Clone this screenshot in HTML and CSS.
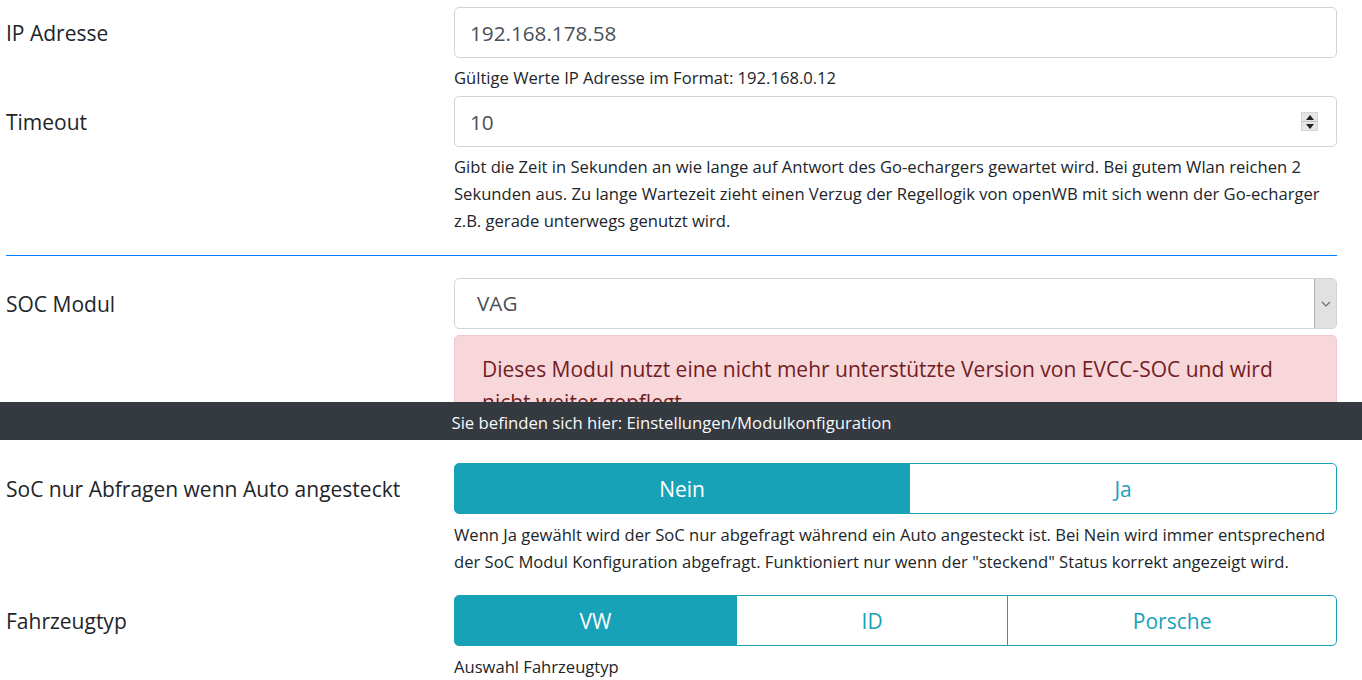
FILE: index.html
```html
<!DOCTYPE html>
<html lang="de">
<head>
  <meta charset="UTF-8">
  <meta name="viewport" content="width=device-width, initial-scale=1.0">
  <title>Modulkonfiguration</title>
  <link rel="stylesheet" href="styles.css">
</head>
<body>
  <div class="page">
    <div class="form-row">
      <label class="col-label">IP Adresse</label>
      <div class="col-field">
        <input type="text" class="form-control" value="192.168.178.58">
        <div class="form-text">Gültige Werte IP Adresse im Format: 192.168.0.12</div>
      </div>
    </div>

    <div class="form-row">
      <label class="col-label">Timeout</label>
      <div class="col-field">
        <div class="number-wrap">
          <input type="text" class="form-control" value="10">
          <span class="spinner">
            <span class="spin-up"></span>
            <span class="spin-down"></span>
          </span>
        </div>
        <div class="form-text">Gibt die Zeit in Sekunden an wie lange auf Antwort des Go-echargers gewartet wird. Bei gutem Wlan reichen 2 Sekunden aus. Zu lange Wartezeit zieht einen Verzug der Regellogik von openWB mit sich wenn der Go-echarger z.B. gerade unterwegs genutzt wird.</div>
      </div>
    </div>

    <hr class="divider">

    <div class="form-row">
      <label class="col-label">SOC Modul</label>
      <div class="col-field">
        <div class="select">
          <span class="select-value">VAG</span>
          <span class="select-arrow">
            <svg width="10" height="6" viewBox="0 0 10 6"><path d="M1 1 L5 5 L9 1" fill="none" stroke="#707070" stroke-width="1.2"/></svg>
          </span>
        </div>
        <div class="alert alert-danger">Dieses Modul nutzt eine nicht mehr unterstützte Version von EVCC-SOC und wird nicht weiter gepflegt.</div>
      </div>
    </div>

    <div class="form-row row-spaced">
      <label class="col-label">SoC nur Abfragen wenn Auto angesteckt</label>
      <div class="col-field">
        <div class="btn-group">
          <button class="btn active">Nein</button>
          <button class="btn">Ja</button>
        </div>
        <div class="form-text help-btn">Wenn Ja gewählt wird der SoC nur abgefragt während ein Auto angesteckt ist. Bei Nein wird immer entsprechend der SoC Modul Konfiguration abgefragt. Funktioniert nur wenn der "steckend" Status korrekt angezeigt wird.</div>
      </div>
    </div>

    <div class="form-row">
      <label class="col-label">Fahrzeugtyp</label>
      <div class="col-field">
        <div class="btn-group">
          <button class="btn active">VW</button>
          <button class="btn">ID</button>
          <button class="btn">Porsche</button>
        </div>
        <div class="form-text help-btn">Auswahl Fahrzeugtyp</div>
      </div>
    </div>
  </div>

  <div class="footer-bar">Sie befinden sich hier: Einstellungen/Modulkonfiguration</div>
</body>
</html>
```

FILE: styles.css
```css
body {
  font-family: 'Open Sans', 'Noto Sans', sans-serif;
  margin: 0;
  padding: 0;
  background-color: #fff;
  color: #212529;
  overflow: hidden;
}

.page {
  padding: 7px 25px 0 6px;
}

.form-row {
  display: grid;
  grid-template-columns: 448px 1fr;
  margin-bottom: 5px;
}

.form-row.row-spaced {
  margin-bottom: 20px;
}

.col-label {
  font-size: 21px;
  line-height: 53px;
  height: 51px;
  white-space: nowrap;
}

.col-field {
  min-width: 0;
}

.form-control {
  display: block;
  box-sizing: border-box;
  width: 100%;
  height: 51px;
  margin: 0;
  padding: 0 15px;
  font-family: inherit;
  font-size: 20.7px;
  color: #495057;
  background-color: #fff;
  border: 1px solid #ced4da;
  border-radius: 5px;
  outline: none;
}

.form-text {
  margin-top: 6px;
  font-size: 16.6px;
  line-height: 27px;
}

.form-text.help-btn {
  margin-top: 7px;
}

.number-wrap {
  position: relative;
}

.spinner {
  position: absolute;
  right: 19px;
  top: 16px;
  width: 17px;
  height: 19px;
  display: flex;
  flex-direction: column;
  background-color: #e6e6e6;
  border: 1px solid #d4d4d4;
  box-sizing: border-box;
}

.spin-up,
.spin-down {
  flex: 1;
  display: flex;
  align-items: center;
  justify-content: center;
}

.spin-up {
  border-bottom: 1px solid #c4c4c4;
}

.spin-up::before {
  content: "";
  border-left: 4px solid transparent;
  border-right: 4px solid transparent;
  border-bottom: 5px solid #222;
}

.spin-down::before {
  content: "";
  border-left: 4px solid transparent;
  border-right: 4px solid transparent;
  border-top: 5px solid #222;
}

.divider {
  margin: 21px 0 22px;
  border: 0;
  border-top: 1px solid #007bff;
}

.select {
  display: flex;
  align-items: stretch;
  height: 51px;
  box-sizing: border-box;
  border: 1px solid #ced4da;
  border-radius: 5px;
  overflow: hidden;
}

.select-value {
  flex: 1;
  padding-left: 22px;
  line-height: 49px;
  font-size: 20.7px;
  color: #495057;
}

.select-arrow {
  width: 21px;
  display: flex;
  align-items: center;
  justify-content: center;
  background-color: #e1e1e1;
  border-left: 1px solid #adadad;
}

.alert {
  margin-top: 6px;
  margin-bottom: 21px;
  padding: 17px 27px;
  font-size: 21px;
  line-height: 33px;
  border: 1px solid #f5c6cb;
  border-radius: 5px;
}

.alert-danger {
  color: #721c24;
  background-color: #f8d7da;
}

.btn-group {
  display: flex;
}

.btn {
  flex: 1 1 auto;
  height: 51px;
  margin: 0;
  padding: 0 12px;
  font-family: inherit;
  font-size: 21px;
  color: #17a2b8;
  background-color: #fff;
  border: 1px solid #17a2b8;
  border-radius: 0;
  cursor: pointer;
}

.btn + .btn {
  margin-left: -1px;
}

.btn:first-child {
  border-radius: 5px 0 0 5px;
}

.btn:last-child {
  border-radius: 0 5px 5px 0;
}

.btn.active {
  color: #fff;
  background-color: #17a2b8;
}

.footer-bar {
  position: absolute;
  top: 402px;
  left: 0;
  right: 0;
  height: 38px;
  padding-right: 19px;
  background-color: #343a40;
  color: #f8f9fa;
  font-size: 16.7px;
  line-height: 42px;
  text-align: center;
}
```
